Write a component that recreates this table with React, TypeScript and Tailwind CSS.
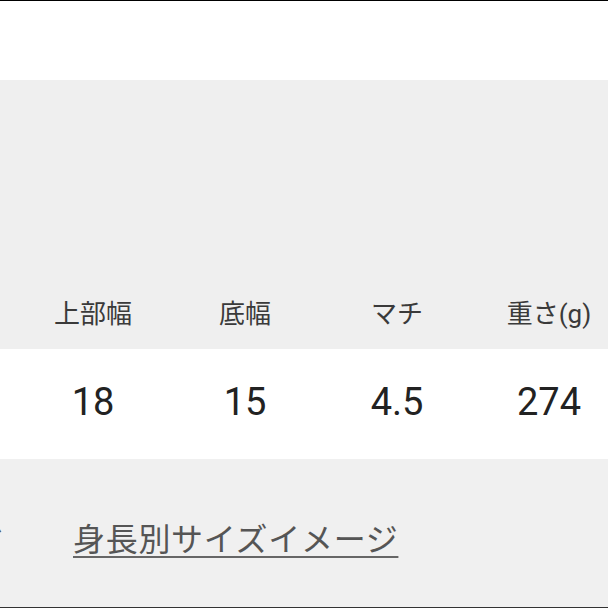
import React from 'react';

const headers = ['上部幅', '底幅', 'マチ', '重さ(g)'];
const values = ['18', '15', '4.5', '274'];

const font = "font-['Roboto','Noto_Sans_CJK_JP',sans-serif]";

export default function App() {
  return (
    <div className={`w-[608px] h-[608px] overflow-hidden bg-white flex flex-col ${font}`}>
      <div className="h-px bg-black" />
      <div className="h-[79px] bg-white" />

      <div className="h-[200px] bg-[#efefef]" />

      <div className="h-[69px] bg-[#efefef] pl-[17px] grid grid-cols-[152px_152px_152px_152px] items-center">
        {headers.map((h) => (
          <div key={h} className="text-center text-[26px] leading-none text-[#3a3a3a] whitespace-nowrap pb-[2px]">
            {h}
          </div>
        ))}
      </div>

      <div className="h-[110px] bg-white pl-[17px] grid grid-cols-[152px_152px_152px_152px] items-center">
        {values.map((v) => (
          <div key={v} className="text-center text-[38px] leading-none text-[#222] pb-[5px]">
            {v}
          </div>
        ))}
      </div>

      <div className="flex-1 bg-[#f0f0f0] flex items-center pt-[14px]">
        <div className="w-[6px] overflow-hidden flex justify-end">
          <span className="whitespace-nowrap text-[32px] tracking-[0.7px] leading-none text-[#555] underline decoration-2 underline-offset-[5px] decoration-[#666]">
            サイズガイド
          </span>
        </div>
        <a className="ml-[67px] whitespace-nowrap text-[32px] tracking-[0.7px] leading-none text-[#555] underline decoration-2 underline-offset-[5px] decoration-[#666]">
          身長別サイズイメージ
        </a>
      </div>
      <div className="h-px bg-[#333]" />
    </div>
  );
}
